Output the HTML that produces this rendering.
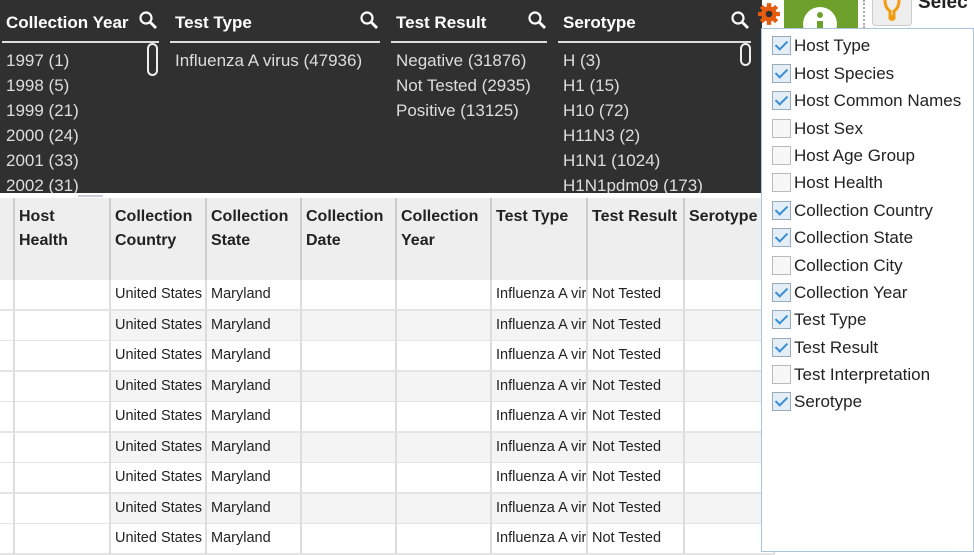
<!DOCTYPE html>
<html><head><style>
*{margin:0;padding:0;box-sizing:border-box}
body{width:974px;height:552px;overflow:hidden;position:relative;background:#fff;font-family:"Liberation Sans",Arial,sans-serif}
.a{position:absolute}
.dark{left:0;top:0;width:762px;height:193px;background:#303030;overflow:hidden}
.h{color:#fff;font-weight:bold;font-size:17px;top:13px}
.ln{top:41px;height:2px;background:#ddd}
.it{color:#ddd;font-size:17px;line-height:25px;top:48px}
.srch{top:10px}
.th{top:198px;height:82px;background:#eee;border-right:2px solid #ccc;font-weight:bold;font-size:16px;color:#222;padding:7px 4px;line-height:24px}
.cell{height:31px;border-right:2px solid #ddd;border-bottom:2px solid #e4e4e4;font-size:14.5px;color:#222;padding:6px 4px;white-space:nowrap;overflow:hidden}
.dd{left:761px;top:28px;width:213px;height:524px;background:#fff;border:1px solid #a9c4dc}
.opt{position:absolute;left:10px;font-size:17px;color:#222;height:22px;line-height:22px}
.cb{display:inline-block;width:19px;height:19px;border:1px solid #9ab;background:#e4eef7;vertical-align:-4px;margin-right:3px;position:relative}
.cb.c::after{content:"";position:absolute;left:5px;top:1px;width:5px;height:10px;border:solid #3b8fd6;border-width:0 2px 2px 0;transform:rotate(45deg)}
.cb.u{background:#f7f7f7;border-color:#bbb}
</style></head><body>
<div class="a dark">
<div class="a h" style="left:6px">Collection Year</div>
<div class="a h" style="left:175px">Test Type</div>
<div class="a h" style="left:396px">Test Result</div>
<div class="a h" style="left:563px">Serotype</div>
<svg class="a srch" style="left:138px" width="20" height="20" viewBox="0 0 20 20"><circle cx="8" cy="8" r="5.5" fill="none" stroke="#fff" stroke-width="2.2"/><path d="M12 12l6 6" stroke="#fff" stroke-width="2.8"/></svg>
<svg class="a srch" style="left:359px" width="20" height="20" viewBox="0 0 20 20"><circle cx="8" cy="8" r="5.5" fill="none" stroke="#fff" stroke-width="2.2"/><path d="M12 12l6 6" stroke="#fff" stroke-width="2.8"/></svg>
<svg class="a srch" style="left:527px" width="20" height="20" viewBox="0 0 20 20"><circle cx="8" cy="8" r="5.5" fill="none" stroke="#fff" stroke-width="2.2"/><path d="M12 12l6 6" stroke="#fff" stroke-width="2.8"/></svg>
<svg class="a srch" style="left:730px" width="20" height="20" viewBox="0 0 20 20"><circle cx="8" cy="8" r="5.5" fill="none" stroke="#fff" stroke-width="2.2"/><path d="M12 12l6 6" stroke="#fff" stroke-width="2.8"/></svg>
<div class="a ln" style="left:2px;width:157px"></div>
<div class="a ln" style="left:170px;width:210px"></div>
<div class="a ln" style="left:391px;width:156px"></div>
<div class="a ln" style="left:558px;width:193px"></div>
<div class="a" style="left:147px;top:43px;width:11px;height:33px;border:2px solid #eee;border-radius:6px"></div>
<div class="a" style="left:740px;top:43px;width:11px;height:23px;border:2px solid #eee;border-radius:6px"></div>
<div class="a it" style="left:6px">1997 (1)<br>1998 (5)<br>1999 (21)<br>2000 (24)<br>2001 (33)<br>2002 (31)</div>
<div class="a it" style="left:175px">Influenza A virus (47936)</div>
<div class="a it" style="left:396px">Negative (31876)<br>Not Tested (2935)<br>Positive (13125)</div>
<div class="a it" style="left:563px">H (3)<br>H1 (15)<br>H10 (72)<br>H11N3 (2)<br>H1N1 (1024)<br>H1N1pdm09 (173)</div>
</div>
<div class="a" style="left:78px;top:195px;width:25px;height:2px;background:#ccd"></div>
<svg class="a" style="left:757px;top:2px" width="24" height="24" viewBox="0 0 22 22"><g fill="#e65c0e"><circle cx="11" cy="11" r="7"/><g stroke="#e65c0e" stroke-width="4"><path d="M11 1v20M1 11h20M4 4l14 14M18 4L4 18"/></g></g><circle cx="11" cy="11" r="3" fill="#303030"/></svg>
<div class="a" style="left:784px;top:0;width:74px;height:28px;background:#6ea02c"></div>
<div class="a" style="left:803px;top:7px;width:34px;height:34px;border-radius:50%;background:#fff"></div>
<div class="a" style="left:817px;top:12px;width:6px;height:6px;background:#6ea02c;border-radius:3px"></div>
<div class="a" style="left:817px;top:21px;width:6px;height:10px;background:#6ea02c"></div>
<div class="a" style="left:863px;top:0;width:0;height:28px;border-left:2px dotted #aaa"></div>
<div class="a" style="left:872px;top:-4px;width:40px;height:30px;background:#eee;border:1px solid #ccc;border-radius:4px"></div>
<svg class="a" style="left:880px;top:0" width="24" height="22" viewBox="0 0 24 22"><path d="M5 0 Q5 8 10 11 L10 18 L14 18 L14 11 Q19 8 19 0" fill="none" stroke="#f39c12" stroke-width="3"/><circle cx="12" cy="18" r="3" fill="#f39c12"/></svg>
<div class="a" style="left:918px;top:-8px;font-weight:bold;font-size:19px;color:#222">Selec</div>
<div class="a" style="left:0;top:198px;width:15px;height:354px;border-right:2px solid #ccc;background:#fff"></div>
<div class="a th" style="left:0;width:15px;padding:0"></div>
<div class="a th" style="left:15px;width:96px">Host<br>Health</div>
<div class="a th" style="left:111px;width:96px">Collection<br>Country</div>
<div class="a th" style="left:207px;width:95px">Collection<br>State</div>
<div class="a th" style="left:302px;width:95px">Collection<br>Date</div>
<div class="a th" style="left:397px;width:95px">Collection<br>Year</div>
<div class="a th" style="left:492px;width:96px">Test Type</div>
<div class="a th" style="left:588px;width:97px">Test Result</div>
<div class="a th" style="left:685px;width:90px">Serotype</div>
<div id="rows"></div>
<script>
var h='';for(var i=0;i<9;i++){var t=Math.round(280+i*30.5);var bg=i%2?'#f4f4f4':'#fff';
var cols=[[0,15,''],[15,96,''],[111,96,'United States'],[207,95,'Maryland'],[302,95,''],[397,95,''],[492,96,'Influenza A virus'],[588,97,'Not Tested'],[685,90,'']];
cols.forEach(function(c,j){h+='<div class="a cell" style="left:'+c[0]+'px;top:'+t+'px;width:'+c[1]+'px;background:'+(j<2?'#fff':bg)+'">'+c[2]+'</div>';});}
document.getElementById('rows').innerHTML=h;
</script>
<div class="a dd">
<div class="opt" style="top:6px"><span class="cb c"></span>Host Type</div>
<div class="opt" style="top:34px"><span class="cb c"></span>Host Species</div>
<div class="opt" style="top:61px"><span class="cb c"></span>Host Common Names</div>
<div class="opt" style="top:89px"><span class="cb u"></span>Host Sex</div>
<div class="opt" style="top:116px"><span class="cb u"></span>Host Age Group</div>
<div class="opt" style="top:143px"><span class="cb u"></span>Host Health</div>
<div class="opt" style="top:171px"><span class="cb c"></span>Collection Country</div>
<div class="opt" style="top:198px"><span class="cb c"></span>Collection State</div>
<div class="opt" style="top:226px"><span class="cb u"></span>Collection City</div>
<div class="opt" style="top:253px"><span class="cb c"></span>Collection Year</div>
<div class="opt" style="top:280px"><span class="cb c"></span>Test Type</div>
<div class="opt" style="top:308px"><span class="cb c"></span>Test Result</div>
<div class="opt" style="top:335px"><span class="cb u"></span>Test Interpretation</div>
<div class="opt" style="top:362px"><span class="cb c"></span>Serotype</div>
</div>
</body></html>
